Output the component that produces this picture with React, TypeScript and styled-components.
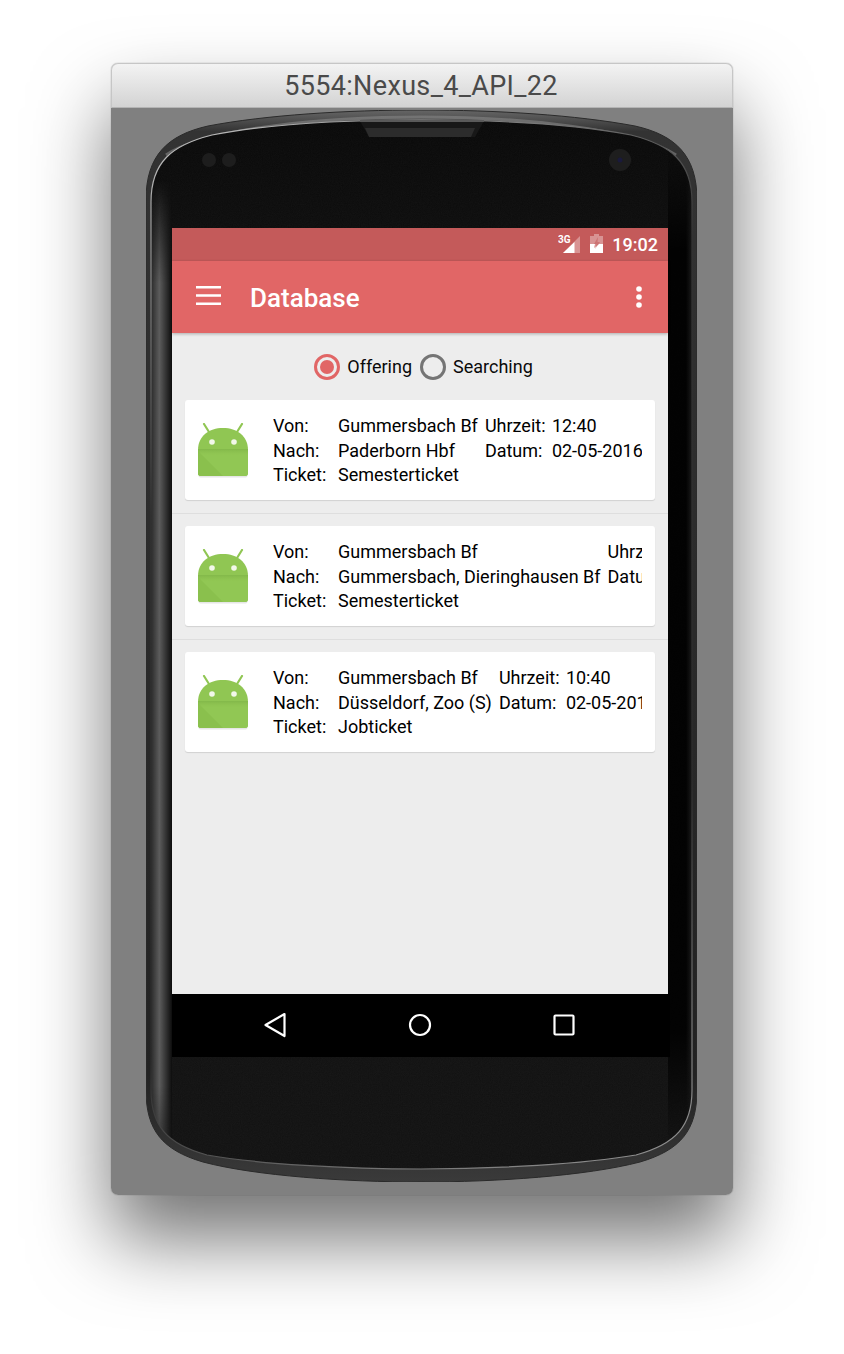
import React from "react";
import styled, { createGlobalStyle } from "styled-components";

const Global = createGlobalStyle`
  html, body { margin: 0; padding: 0; background: #fff; }
  body { font-family: Roboto, "Liberation Sans", sans-serif; }
`;

const Stage = styled.div`
  width: 844px;
  height: 1354px;
  padding: 63px 111px 0;
  box-sizing: border-box;
  overflow: hidden;
`;

const Win = styled.div`
  width: 622px;
  height: 1132px;
  border-radius: 7px;
  display: flex;
  flex-direction: column;
  box-shadow: 0 44px 78px 0 rgba(0, 0, 0, 0.55), 0 0 1px rgba(0, 0, 0, 0.5);
`;

const TitleBar = styled.div`
  height: 45px;
  flex: none;
  display: flex;
  align-items: center;
  justify-content: center;
  padding-right: 2px;
  border-radius: 7px 7px 0 0;
  background: linear-gradient(#f3f3f3, #d3d3d3);
  border: 1px solid #c6c6c6;
  border-bottom-color: #b4b4b4;
  box-sizing: border-box;
  color: #4a4a4a;
  font-size: 27px;
  letter-spacing: 0.35px;
`;

const WinBody = styled.div`
  flex: 1;
  background: #808080;
  border-radius: 0 0 7px 7px;
  padding: 2px 35px 0;
`;

const Phone = styled.div`
  position: relative;
  width: 551px;
  height: 1072px;
  padding: 118px 0 0 26px;
  box-sizing: border-box;
`;

const PhoneArt = styled.svg`
  position: absolute;
  left: 0;
  top: 0;
`;

const Screen = styled.div`
  position: relative;
  width: 498px;
  display: flex;
  flex-direction: column;
`;

const StatusBar = styled.div`
  width: 496px;
  height: 33px;
  background: #c45a5a;
  display: flex;
  align-items: center;
  justify-content: flex-end;
  padding-right: 10px;
  box-sizing: border-box;
  color: #fff;
`;

const BatteryGlyph = styled.svg`
  margin: -2px 0 0 8px;
`;

const Clock = styled.span`
  font-size: 18px;
  font-weight: 500;
  margin-left: 8px;
`;

const AppBar = styled.div`
  position: relative;
  z-index: 1;
  width: 496px;
  height: 72px;
  background: #e16666;
  box-shadow: 0 1px 3px rgba(0, 0, 0, 0.28);
  display: flex;
  align-items: center;
  padding: 0 26px 0 24px;
  box-sizing: border-box;
  color: #fff;
`;

const MenuGlyph = styled.svg`
  margin-top: -3px;
`;

const AppTitle = styled.span`
  font-size: 26px;
  font-weight: 500;
  margin-left: 29px;
  padding-top: 1px;
  flex: 1;
`;

const Content = styled.div`
  width: 496px;
  height: 661px;
  background: #ededed;
  display: flex;
  flex-direction: column;
`;

const RadioRow = styled.div`
  height: 67px;
  display: flex;
  align-items: center;
  justify-content: center;
  padding-left: 7px;
`;

const RadioItem = styled.div`
  display: flex;
  align-items: center;
  gap: 7px;
  margin-right: 8px;
  font-size: 18px;
  color: #0a0a0a;
  &:last-child { margin-right: 0; }
`;

const RadioCircle = styled.span<{ $on?: boolean }>`
  width: 26px;
  height: 26px;
  border-radius: 50%;
  border: 3px solid ${(p) => (p.$on ? "#e16666" : "#757575")};
  box-sizing: border-box;
  display: flex;
  align-items: center;
  justify-content: center;
  &::after {
    content: "";
    display: ${(p) => (p.$on ? "block" : "none")};
    width: 14px;
    height: 14px;
    border-radius: 50%;
    background: #e16666;
  }
`;

const ListItem = styled.div`
  padding: 0 13px 13px;
  & + & {
    border-top: 1px solid #dedede;
    padding-top: 12px;
  }
`;

const Card = styled.div`
  height: 100px;
  background: #fff;
  border-radius: 3px;
  box-shadow: 0 1px 1px rgba(0, 0, 0, 0.12);
  display: flex;
  align-items: center;
  padding: 0 12px 0 13px;
  box-sizing: border-box;
`;

const Fields = styled.div`
  margin-left: 25px;
  padding-top: 2px;
  width: 369px;
  overflow: hidden;
  display: grid;
  grid-template-columns: 65px max-content 67px max-content;
  grid-auto-rows: 24.5px;
  font-size: 18px;
  line-height: 24.5px;
  color: #000;
  white-space: nowrap;
`;

const Value = styled.span`
  padding-right: 7px;
`;

const NavBar = styled.div`
  width: 498px;
  height: 63px;
  background: #000;
  display: flex;
  align-items: center;
  justify-content: space-between;
  padding: 0 94px 2px 91px;
  box-sizing: border-box;
`;

const RobotIcon = styled.svg`
  flex: none;
  margin-top: 2px;
`;

function Android({ id }: { id: string }) {
  return (
    <RobotIcon width="50" height="56" viewBox="0 0 50 56">
      <defs>
        <linearGradient id={id} x1="0" y1="0" x2="0" y2="1">
          <stop offset="0" stopColor="#7fb447" />
          <stop offset="1" stopColor="#8fc54f" stopOpacity="0" />
        </linearGradient>
      </defs>
      <path d="M6 1l5 8M44 1l-5 8" stroke="#90c653" strokeWidth="2.2" strokeLinecap="round" />
      <rect x="0.5" y="51" width="49" height="3.5" rx="2" fill="#e6e6e6" />
      <path d="M0 27C0 13 11 5 25 5s25 8 25 22v23c0 2-1 3-3 3H3c-2 0-3-1-3-3z" fill="#90c653" />
      <path d="M0 26H50V50c0 2-1 3-3 3H3c-2 0-3-1-3-3z" fill="#91c754" />
      <path d="M0 28L25 53H3c-2 0-3-1-3-3z" fill="#8ac04d" />
      <path d="M0 26H50V33H0z" fill={`url(#${id})`} opacity="0.8" />
      <circle cx="14" cy="19" r="2.8" fill="#f2f8ea" />
      <circle cx="36" cy="19" r="2.8" fill="#f2f8ea" />
    </RobotIcon>
  );
}

const OUTER =
  "M0 90C0 45 22 25 62 16C120 5 200 0 275 0C350 0 430 5 489 16C529 25 551 45 551 90L551 980C551 1020 535 1040 494 1052C440 1066 350 1072 275 1072C200 1072 110 1066 57 1052C16 1040 0 1020 0 980Z";
const INNER =
  "M5 92C5 52 26 35 66 25C122 14 200 10 275 10C350 10 428 14 485 25C525 35 546 52 546 92L546 980C546 1016 530 1034 490 1045C438 1054 350 1059 275 1059C200 1059 112 1054 61 1045C21 1034 5 1016 5 980Z";

function PhoneDrawing() {
  return (
    <PhoneArt width="551" height="1072" viewBox="0 0 551 1072">
      <defs>
        <linearGradient id="edge" x1="0" y1="0" x2="0" y2="1">
          <stop offset="0" stopColor="#666" />
          <stop offset="0.02" stopColor="#333" />
          <stop offset="0.9" stopColor="#222" />
          <stop offset="1" stopColor="#3a3a3a" />
        </linearGradient>
        <linearGradient id="rim" gradientUnits="userSpaceOnUse" x1="0" y1="0" x2="551" y2="1072">
          <stop offset="0" stopColor="#d0d0d0" />
          <stop offset="0.12" stopColor="#8a8a8a" />
          <stop offset="0.3" stopColor="#333" />
          <stop offset="0.7" stopColor="#2c2c2c" />
          <stop offset="0.88" stopColor="#777" />
          <stop offset="1" stopColor="#999" />
        </linearGradient>
        <linearGradient id="sideL" x1="0" y1="0" x2="1" y2="0">
          <stop offset="0" stopColor="#2a2a2a" />
          <stop offset="0.4" stopColor="#5c5c5c" />
          <stop offset="1" stopColor="#0d0d0d" />
        </linearGradient>
        <linearGradient id="sideR" x1="0" y1="0" x2="1" y2="0">
          <stop offset="0" stopColor="#000" stopOpacity="0.85" />
          <stop offset="0.75" stopColor="#000" stopOpacity="0.85" />
          <stop offset="1" stopColor="#1c1c1c" />
        </linearGradient>
        <linearGradient id="sideFade" x1="0" y1="0" x2="0" y2="1">
          <stop offset="0" stopColor="#000" />
          <stop offset="0.1" stopColor="#fff" />
          <stop offset="0.88" stopColor="#fff" />
          <stop offset="1" stopColor="#000" />
        </linearGradient>
        <linearGradient id="face" x1="0" y1="0" x2="0" y2="1">
          <stop offset="0" stopColor="#080808" />
          <stop offset="0.15" stopColor="#0e0e0e" />
          <stop offset="1" stopColor="#111" />
        </linearGradient>
        <mask id="leftMask" maskUnits="userSpaceOnUse" x="0" y="0" width="551" height="1072">
          <rect x="0" y="70" width="40" height="1030" fill="url(#sideFade)" />
        </mask>
        <mask id="rightMask" maskUnits="userSpaceOnUse" x="0" y="0" width="551" height="1072">
          <rect x="500" y="40" width="60" height="1000" fill="url(#sideFade)" />
        </mask>
        <clipPath id="innerClip">
          <path d={INNER} />
        </clipPath>
        <filter id="grain" x="0" y="0" width="100%" height="100%">
          <feTurbulence type="fractalNoise" baseFrequency="0.9" numOctaves="2" seed="4" />
          <feColorMatrix values="0 0 0 0 1  0 0 0 0 1  0 0 0 0 1  0 0 0 0.035 0" />
        </filter>
      </defs>
      <path d={OUTER} fill="url(#edge)" stroke="#2a2a2a" strokeWidth="1" />
      <path d="M20 45C60 18 180 7 275 7C370 7 490 18 530 45" fill="none" stroke="#8c8c8c" strokeWidth="3" opacity="0.55" />
      <path d={INNER} fill="url(#face)" />
      <g clipPath="url(#innerClip)">
        <rect x="0" y="0" width="551" height="1072" filter="url(#grain)" />
        <rect x="5" y="70" width="21" height="1030" fill="url(#sideL)" mask="url(#leftMask)" />
        <rect x="522" y="40" width="24" height="1000" fill="url(#sideR)" mask="url(#rightMask)" />
      </g>
      <path d={INNER} fill="none" stroke="url(#rim)" strokeWidth="1.2" />
      <path d="M214 11H338L329 27H223Z" fill="#181818" />
      <path d="M219 18H329L325 27H223Z" fill="#2c2c2c" />
      <path d="M214 11H338" stroke="#5a5a5a" strokeWidth="2" />
      <circle cx="63" cy="50" r="7" fill="#1d1d1d" />
      <circle cx="83" cy="50" r="7" fill="#1d1d1d" />
      <circle cx="474" cy="50" r="11" fill="#1e1e1e" />
      <circle cx="474" cy="50" r="2.5" fill="#1a1a3c" />
    </PhoneArt>
  );
}

type Row = { von: string; nach: string; ticket: string; time: string; date: string };

const rows: Row[] = [
  { von: "Gummersbach Bf", nach: "Paderborn Hbf", ticket: "Semesterticket", time: "12:40", date: "02-05-2016" },
  { von: "Gummersbach Bf", nach: "Gummersbach, Dieringhausen Bf", ticket: "Semesterticket", time: "12:40", date: "02-05-2016" },
  { von: "Gummersbach Bf", nach: "Düsseldorf, Zoo (S)", ticket: "Jobticket", time: "10:40", date: "02-05-2016" },
];

export default function App() {
  return (
    <Stage>
      <Global />
      <Win>
        <TitleBar>5554:Nexus_4_API_22</TitleBar>
        <WinBody>
          <Phone>
            <PhoneDrawing />
            <Screen>
              <StatusBar>
                <svg width="24" height="20" viewBox="0 0 24 20">
                  <path d="M22 1V18H5Z" fill="#fff" opacity="0.35" />
                  <path d="M16.5 7V18H5Z" fill="#fff" />
                  <text x="0" y="8" fontSize="10" fontWeight="700" fill="#fff" fontFamily="Roboto, sans-serif">3G</text>
                </svg>
                <BatteryGlyph width="14" height="19" viewBox="0 0 14 19">
                  <path d="M4 0h5v2h4v17H0V2h4z" fill="#fff" opacity="0.35" />
                  <path d="M0 10h5l-1 4 5-4h4v9H0z" fill="#fff" />
                  <path d="M8 3L4 10h2.5L5 15l5-7H7.5z" fill="#c45a5a" opacity="0.55" />
                </BatteryGlyph>
                <Clock>19:02</Clock>
              </StatusBar>
              <AppBar>
                <MenuGlyph width="25" height="19" viewBox="0 0 25 19">
                  <path d="M0 1.2H25M0 9.5H25M0 17.8H25" stroke="#fff" strokeWidth="2.4" />
                </MenuGlyph>
                <AppTitle>Database</AppTitle>
                <svg width="6" height="22" viewBox="0 0 6 22">
                  <circle cx="3" cy="3" r="2.8" fill="#fff" />
                  <circle cx="3" cy="11" r="2.8" fill="#fff" />
                  <circle cx="3" cy="19" r="2.8" fill="#fff" />
                </svg>
              </AppBar>
              <Content>
                <RadioRow>
                  <RadioItem>
                    <RadioCircle $on />
                    Offering
                  </RadioItem>
                  <RadioItem>
                    <RadioCircle />
                    Searching
                  </RadioItem>
                </RadioRow>
                {rows.map((r, i) => (
                  <ListItem key={i}>
                    <Card>
                      <Android id={`fold${i}`} />
                      <Fields>
                        <span>Von:</span>
                        <Value>{r.von}</Value>
                        <span>Uhrzeit:</span>
                        <span>{r.time}</span>
                        <span>Nach:</span>
                        <Value>{r.nach}</Value>
                        <span>Datum:</span>
                        <span>{r.date}</span>
                        <span>Ticket:</span>
                        <Value>{r.ticket}</Value>
                      </Fields>
                    </Card>
                  </ListItem>
                ))}
              </Content>
              <NavBar>
                <svg width="24" height="26" viewBox="0 0 24 26">
                  <path d="M21.5 2L2.5 13L21.5 24Z" fill="none" stroke="#fff" strokeWidth="2.2" strokeLinejoin="round" />
                </svg>
                <svg width="24" height="24" viewBox="0 0 24 24">
                  <circle cx="12" cy="12" r="10" fill="none" stroke="#fff" strokeWidth="2.2" />
                </svg>
                <svg width="24" height="24" viewBox="0 0 24 24">
                  <rect x="2.5" y="2.5" width="19" height="19" rx="1" fill="none" stroke="#fff" strokeWidth="2.2" />
                </svg>
              </NavBar>
            </Screen>
          </Phone>
        </WinBody>
      </Win>
    </Stage>
  );
}
